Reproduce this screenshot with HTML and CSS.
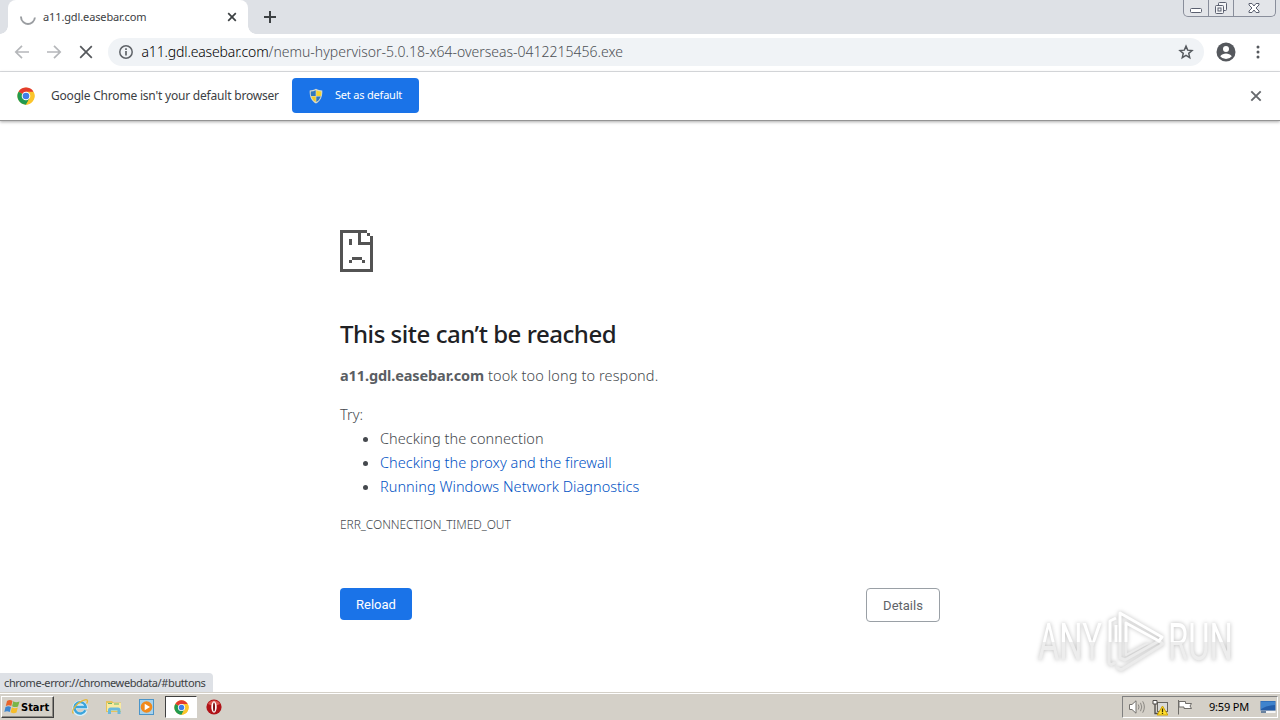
FILE: index.html
```html
<!DOCTYPE html>
<html lang="en">
<head>
<meta charset="utf-8">
<title>a11.gdl.easebar.com</title>
<link rel="stylesheet" href="styles.css">
</head>
<body>
<svg class="defs" width="0" height="0" aria-hidden="true">
  <symbol id="chrome" viewBox="0 0 48 48">
    <circle cx="24" cy="24" r="23" fill="#fbc52c"/>
    <path d="M24 24 4.100 12.500A23 23 0 0 1 43.900 12.500H24Z" fill="#e33b2e"/>
    <path d="M4.100 12.500A23 23 0 0 0 24 47L34 29.700 24 24Z" fill="#229a4f"/>
    <path d="M24 13H44A23 23 0 0 1 24 47L34 29Z" fill="#fbc52c"/>
    <circle cx="24" cy="24" r="11.500" fill="#fff"/>
    <circle cx="24" cy="24" r="8.800" fill="#3f7ee8"/>
  </symbol>
</svg>
<div class="screen">
  <header class="tabstrip">
    <div class="tab">
      <svg class="spinner" width="18" height="18" viewBox="0 0 18 18"><path d="M2 8.500A7 7 0 0 0 4.500 14.200Q9 18 13.500 14.200A7 7 0 0 0 15.900 9.500" fill="none" stroke="#9a9da1" stroke-width="1.900"/></svg>
      <span class="tab-title">a11.gdl.easebar.com</span>
      <svg class="tab-close" width="10" height="10" viewBox="0 0 10 10"><path d="M1.200 1.200 8.800 8.800M8.800 1.200 1.200 8.800" stroke="#3c4043" stroke-width="1.700"/></svg>
    </div>
    <svg class="new-tab" width="14" height="14" viewBox="0 0 14 14"><path d="M7 1V13M1 7H13" stroke="#3c4043" stroke-width="2"/></svg>
    <div class="caption">
      <span class="cap cap-min"><svg width="14" height="8" viewBox="0 0 14 8"><rect x="1.500" y="2.500" width="11" height="4" rx="1" fill="#fff" stroke="#5b6070"/></svg></span>
      <span class="cap cap-max"><svg width="14" height="14" viewBox="0 0 14 14" fill="#f4f5f7" stroke="#5b6070"><rect x="4.500" y="1.500" width="8" height="8" rx="1"/><rect x="1.500" y="4.500" width="8" height="8" rx="1"/><rect x="4" y="7" width="3" height="3"/></svg></span>
      <span class="cap cap-close"><svg width="12" height="12" viewBox="0 0 12 12"><path d="M1 1.500H4L6 4 8 1.500H11V3L8 6 11 9V10.500H8L6 8 4 10.500H1V9L4 6 1 3Z" fill="#fff" stroke="#5b6070"/></svg></span>
    </div>
  </header>

  <nav class="toolbar">
    <svg width="16" height="16" viewBox="0 0 16 16" fill="none" stroke="#b5b7ba" stroke-width="1.700"><path d="M15 8H2M8 1.800 1.800 8 8 14.200"/></svg>
    <svg width="16" height="16" viewBox="0 0 16 16" fill="none" stroke="#b5b7ba" stroke-width="1.700"><path d="M1 8H14M8 1.800 14.200 8 8 14.200"/></svg>
    <svg width="16" height="16" viewBox="0 0 16 16" fill="none" stroke="#55585c" stroke-width="1.700"><path d="M2.200 2.200 13.800 13.800M13.800 2.200 2.200 13.800"/></svg>
    <div class="omnibox">
      <svg width="16" height="16" viewBox="0 0 16 16"><circle cx="8" cy="8" r="6.200" fill="none" stroke="#5f6368" stroke-width="1.500"/><path d="M8 7V11.500M8 4.300V5.900" stroke="#5f6368" stroke-width="1.700"/></svg>
      <span class="url"><span class="host">a11.gdl.easebar.com</span><span class="path">/nemu-hypervisor-5.0.18-x64-overseas-0412215456.exe</span></span>
      <svg class="star" width="16" height="16" viewBox="0 0 24 24"><path d="M12 3.200 14.500 9.200 21 9.800 16.100 14 17.600 20.400 12 17 6.400 20.400 7.900 14 3 9.800 9.500 9.200Z" fill="none" stroke="#55595e" stroke-width="2.200"/></svg>
    </div>
    <svg class="avatar" width="20" height="20" viewBox="0 0 20 20"><circle cx="10" cy="10" r="9.500" fill="#55585d"/><circle cx="10" cy="6.900" r="3" fill="#fff"/><path d="M4.200 14.200C5.500 12.200 8 11.400 10 11.400S14.500 12.200 15.800 14.200A7.300 7.300 0 0 1 4.200 14.200Z" fill="#fff"/></svg>
    <svg class="dots" width="4" height="14" viewBox="0 0 4 14" fill="#55585d"><circle cx="2" cy="2" r="1.500"/><circle cx="2" cy="7" r="1.500"/><circle cx="2" cy="12" r="1.500"/></svg>
  </nav>

  <section class="infobar">
    <svg class="info-logo" width="18" height="18"><use href="#chrome"/></svg>
    <span class="info-text">Google Chrome isn't your default browser</span>
    <button class="default-btn">
      <svg width="16" height="16" viewBox="0 0 16 16"><path d="M8 .8C10 2 12 2.500 14.300 2.500 14.700 9 12 13.500 8 15.500 4 13.500 1.300 9 1.700 2.500 4 2.500 6 2 8 .8Z" fill="#d6d9ce"/><path d="M7.700 2.300V8H3Q2.600 6 2.800 3.600 5.500 3.500 7.700 2.300Z" fill="#3177be"/><path d="M8.300 2.300V8H13Q13.400 6 13.200 3.600 10.500 3.500 8.300 2.300Z" fill="#f5d32f"/><path d="M7.700 8.500V14Q4.300 12 3.200 8.500Z" fill="#f1cb25"/><path d="M8.300 8.500V14Q11.700 12 12.800 8.500Z" fill="#3177be"/></svg>
      <span>Set as default</span>
    </button>
    <svg class="info-close" width="12" height="12" viewBox="0 0 12 12"><path d="M1.300 1.300 10.700 10.700M10.700 1.300 1.300 10.700" stroke="#66696d" stroke-width="1.900"/></svg>
  </section>

  <main class="page">
    <div class="error">
      <svg class="sad" width="33" height="42" viewBox="0 0 33 42" fill="#535353" shape-rendering="crispEdges"><path d="M0 0H27V3H21V12H33V42H0ZM3 3V39H30V15H18V3ZM27 3H30V6H27ZM30 6H33V12H30ZM9 9H12V15H9ZM12 27H22V30H12ZM9 30H12V33H9ZM22 30H25V33H22Z" fill-rule="evenodd"/><rect x="30" y="6" width="3" height="9"/></svg>
      <h1>This site can’t be reached</h1>
      <p class="summary"><strong>a11.gdl.easebar.com</strong> <span>took too long to respond.</span></p>
      <p class="try">Try:</p>
      <ul>
        <li>Checking the connection</li>
        <li><a>Checking the proxy and the firewall</a></li>
        <li><a>Running Windows Network Diagnostics</a></li>
      </ul>
      <p class="code">ERR_CONNECTION_TIMED_OUT</p>
      <div class="buttons">
        <button class="reload">Reload</button>
        <button class="details">Details</button>
      </div>
    </div>
    <div class="status">chrome-error://chromewebdata/#buttons</div>
    <div class="watermark">
      <span class="word">ANY</span>
      <svg width="60" height="64" viewBox="0 0 60 64" fill="none" stroke-linejoin="round"><path d="M16 33V49L21 51 55 32 59 35 17 61 12 58M12 53 7 56 5 54V33" stroke="#ebebeb" stroke-width="3"/><path d="M22 33V46L44 34" stroke="#ebebeb" stroke-width="2"/><path d="M16 33V4L58 28 55 32 22 14V33M12 9 6 12V33M12 16V33" stroke="#fff" stroke-width="3"/></svg>
      <span class="word">RUN</span>
    </div>
  </main>

  <footer class="taskbar">
    <div class="start">
      <svg width="17" height="16" viewBox="0 0 17 16"><path d="M3 2Q6 0 8.500 2L7.300 7Q5 5.500 1.800 7Z" fill="#e8642b"/><path d="M9.300 2.300Q12 4 15.500 2.500L14 7.500Q11 8.800 8.100 7.200Z" fill="#79b547"/><path d="M1.500 8Q4.500 6.500 7 8L5.800 13Q3 11.500 .3 13Z" fill="#3d86d0"/><path d="M7.900 8.300Q10.500 10 13.800 8.500L12.500 13.500Q9.500 15 6.600 13.300Z" fill="#f6bd2b"/></svg>
      <span>Start</span>
    </div>
    <div class="quick">
      <svg width="18" height="18" viewBox="0 0 18 18" fill="none"><path d="M14.500 12.500A5.800 5.800 0 1 1 14.800 9H5" stroke="#d8f1fb" stroke-width="4"/><path d="M14.300 12.300A5.700 5.700 0 1 1 14.800 9H4" stroke="#3ba4dc" stroke-width="2.400"/><path d="M2.500 15.500C-.5 13 6 4 14 1.800 17 1.200 17 3.500 15.500 5.500" stroke="#e5b93b" stroke-width="1.300"/></svg>
      <svg width="18" height="18" viewBox="0 0 18 18"><path d="M1 3H7L8.500 4.500H16V14H1Z" fill="#e5c35c"/><path d="M2 5H16V13H2Z" fill="#f9eaa0"/><path d="M3 5.500H7M9 6H14" stroke="#66b66b"/><path d="M3 16V12Q3 9.500 5.500 9.500H13Q15.500 9.500 15.500 12V16H12.500V12.500H6V16Z" fill="#69b9dc"/></svg>
      <svg width="18" height="18" viewBox="0 0 18 18"><rect x="1.500" y="1.500" width="14" height="15" fill="#a7d2ec" stroke="#4b95c9"/><circle cx="8.500" cy="9" r="5.800" fill="#f18a1c"/><path d="M6.700 5.700 12 9 6.700 12.300Z" fill="#fff"/></svg>
    </div>
    <div class="task-active"><svg width="15" height="15"><use href="#chrome"/></svg></div>
    <svg class="opera" width="16" height="16" viewBox="0 0 16 16"><circle cx="8" cy="8" r="7.600" fill="#b01318"/><path d="M2 5A7 7 0 0 1 14 5Q8 8 2 5Z" fill="#dd5650"/><ellipse cx="8" cy="8" rx="2.700" ry="5.800" fill="#fff"/><ellipse cx="8" cy="8" rx="1" ry="4.500" fill="#7d1014"/></svg>
    <div class="tray">
      <svg width="18" height="16" viewBox="0 0 18 16" fill="none"><path d="M1.500 5.500H4L8 1.800V14.200L4 10.500H1.500Z" fill="#fff" stroke="#74726e"/><path d="M10.300 5.500Q11.800 8 10.300 10.500M12.500 3.800Q15 8 12.500 12.200M14.700 2.300Q18 8 14.700 13.700" stroke="#8a8782"/></svg>
      <svg class="net" width="17" height="17" viewBox="0 0 17 17"><rect x="5.500" y="3.500" width="10" height="9" fill="#d9dad8" stroke="#66645f"/><path d="M1 1.500H5V5H1Z" fill="#fff" stroke="#4d4b48"/><path d="M3 5V14.500H9" fill="none" stroke="#4d4b48" stroke-width="1.300"/><path d="M10.500 7 15.800 16H5.200Z" fill="#ffdf2e" stroke="#cfa200"/><path d="M10.500 9.500V13M10.500 13.800V15" stroke="#3c3206" stroke-width="1.300"/></svg>
      <svg class="flag" width="16" height="16" viewBox="0 0 16 16"><path d="M1.500 1V15.500M2 2.500H8.500V4.500H14.500L13 7 14.500 9.500H7V8H2Z" fill="#fff" stroke="#6f6d69"/></svg>
      <span class="clock">9:59 PM</span>
      <svg class="desk" width="16" height="14" viewBox="0 0 16 14"><path d="M.5 1H15.500V10.500H.5Z" fill="#245da9"/><path d="M1 1.500H15V5Q7 5 1 9Z" fill="#3f83cd"/><path d="M5 12H15.500" stroke="#f5f5f5" stroke-width="2"/><path d="M1 12H6" stroke="#69829e" stroke-width="2"/></svg>
    </div>
  </footer>
</div>
</body>
</html>
```
FILE: styles.css
```css
* { box-sizing: border-box; }
body { margin: 0; background: #fff; font-family: "Noto Sans", "Open Sans", sans-serif; }
svg { display: block; flex: none; }
button { font: inherit; margin: 0; padding: 0; border: 0; }
.defs { position: absolute; }
.screen { width: 1280px; height: 720px; display: flex; flex-direction: column; overflow: hidden; }

.tabstrip { height: 34px; flex: none; background: #dee1e6; display: flex; align-items: flex-start; padding-left: 8px; }
.tab { position: relative; width: 240px; height: 34px; background: #fff; border-radius: 8px 8px 0 0; display: flex; align-items: center; padding: 0 11px; }
.tab::before, .tab::after { content: ""; position: absolute; bottom: 0; width: 8px; height: 8px; }
.tab::before { left: -8px; background: radial-gradient(circle at 0 0, transparent 7.500px, #fff 8px); }
.tab::after { right: -8px; background: radial-gradient(circle at 100% 0, transparent 7.500px, #fff 8px); }
.tab-title { margin-left: 6px; padding-bottom: 2px; flex: 1; font-size: 11px; letter-spacing: -0.120px; color: #3c4043; white-space: nowrap; }
.new-tab { margin: 10px 0 0 15px; }
.caption { margin-left: auto; margin-right: 4px; width: 93px; height: 17px; display: flex; border: 1px solid #898e9b; border-top: 0; border-radius: 0 0 5px 5px; background: #e3e5e9; }
.cap { display: flex; align-items: center; justify-content: center; }
.cap + .cap { border-left: 1px solid #898e9b; }
.cap-min { width: 24px; padding-top: 3px; }
.cap-max { width: 25px; }
.cap-close { flex: 1; padding-right: 2px; }

.toolbar { height: 38px; flex: none; display: flex; align-items: center; padding: 0 20px 2px 14px; gap: 16px; border-bottom: 1px solid #dadce0; }
.omnibox { height: 28px; width: 1096px; margin-left: -2px; border-radius: 14px; background: #f0f3f6; display: flex; align-items: center; padding: 0 10px; }
.url { flex: 1; margin-left: 7.500px; font-size: 14px; font-weight: 300; white-space: nowrap; }
.host { color: #000; letter-spacing: -0.150px; }
.path { color: #4c5055; letter-spacing: 0; }
.avatar { margin-left: -4px; }
.dots { margin-left: 4px; }

.infobar { height: 49px; flex: none; display: flex; align-items: center; padding: 0 18px 1px 17px; border-bottom: 1px solid #949494; box-shadow: 0 1px 3px #aaa; position: relative; }
.info-text { margin-left: 16px; width: 241px; font-size: 12px; letter-spacing: -0.200px; color: #3c4043; white-space: nowrap; }
.default-btn { width: 127px; height: 35px; border-radius: 4px; background: #1a73e8; color: #fff; font-size: 11px; letter-spacing: -0.200px; display: flex; align-items: center; padding-left: 16px; gap: 11px; white-space: nowrap; }
.default-btn span { padding-bottom: 2px; }
.info-close { margin-left: auto; }

.page { flex: 1; position: relative; min-height: 0; padding-top: 109px; }
.error { width: 600px; margin: 0 auto; color: #45494e; font-size: 14.500px; line-height: 24px; font-weight: 300; }
h1 { margin: 46px 0 0; font-size: 24px; line-height: 32px; font-weight: 500; letter-spacing: -0.460px; color: #202124; white-space: nowrap; }
p { margin: 0; white-space: nowrap; }
.summary { margin-top: 13px; letter-spacing: 0.120px; }
.summary strong { font-weight: 700; letter-spacing: -0.110px; color: #5a5e63; }
.try { margin-top: 15px; }
ul { margin: 0; padding-left: 40px; letter-spacing: 0.040px; }
a { color: #0052c4; }
.code { margin-top: 15px; font-size: 12px; letter-spacing: -0.060px; }
.buttons { margin-top: 51px; display: flex; justify-content: space-between; font-family: Roboto, sans-serif; font-size: 13px; font-weight: 400; }
.reload { width: 72px; height: 32px; padding-top: 1px; border-radius: 4px; background: #1a73e8; color: #fff; }
.details { width: 74px; height: 34px; padding-top: 1px; border-radius: 4px; border: 1px solid #9aa0a6; background: #fff; color: #5f6368; }
.status { position: absolute; left: 0; bottom: 0; width: 213px; height: 19px; background: #dee1e6; border-radius: 0 4px 0 0; padding-left: 4px; font-size: 11px; letter-spacing: -0.390px; line-height: 19px; color: #3c4043; white-space: nowrap; }
.watermark { position: absolute; left: 1038px; top: 487px; display: flex; align-items: center; filter: drop-shadow(0 0 2px #bbb); font-family: Roboto, sans-serif; font-size: 52px; line-height: 64px; }
.word { width: 110px; height: 66px; margin-right: -44px; padding-top: 3px; color: transparent; background: linear-gradient(#fff 52%, #ededed 52%); background-clip: text; -webkit-background-clip: text; transform: scaleX(.63); transform-origin: 0 50%; white-space: nowrap; }
.watermark svg + .word { margin-left: 4px; }

.taskbar { height: 28px; flex: none; background: #d4d0c8; border-top: 1px solid #d4d0c8; box-shadow: inset 0 1px #fff; display: flex; align-items: center; padding: 1px 2px 0 1px; }
.start { width: 53px; height: 22px; display: flex; align-items: center; padding-left: 2px; border: 1px solid; border-color: #fff #404040 #404040 #fff; box-shadow: inset -1px -1px #8d8a84; font: bold 11px "DejaVu Sans Condensed", sans-serif; letter-spacing: 0; color: #000; }
.quick { display: flex; gap: 15.500px; margin-left: 17px; }
.task-active { width: 32px; height: 22px; margin-left: 9px; display: flex; align-items: center; justify-content: center; background: #fff; border: 1px solid; border-color: #404040 #fff #fff #404040; }
.opera { margin-left: 9px; }
.tray { margin-left: auto; width: 156px; height: 22px; display: flex; align-items: center; border: 1px solid; border-color: #808080 #fff #fff #808080; padding-left: 5px; }
.net { margin-left: 6px; }
.flag { margin-left: 8px; }
.clock { margin-left: 16px; width: 51px; padding-bottom: 1px; font-size: 11px; color: #000; white-space: nowrap; letter-spacing: -0.200px; }
```
